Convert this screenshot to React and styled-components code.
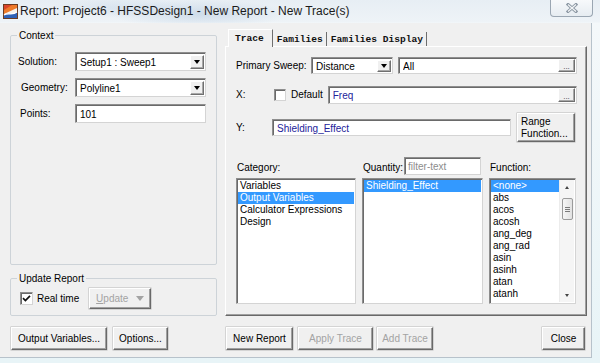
import React from 'react';
import styled, { createGlobalStyle, css } from 'styled-components';

const UI = `"Liberation Sans", Arial, sans-serif`;

const Global = createGlobalStyle`
  html, body { margin: 0; padding: 0; overflow: hidden; background: #eef5f8; }
  #root { width: 600px; height: 363px; }
  *, *::before, *::after { box-sizing: border-box; }
`;

const Window = styled.div`
  width: 600px;
  height: 363px;
  display: flex;
  flex-direction: column;
  overflow: hidden;
  font-family: ${UI};
  font-size: 10px;
  color: #000;
  background:
    radial-gradient(ellipse 90px 14px at 200px 14px, rgba(170, 195, 220, 0.45), transparent),
    radial-gradient(ellipse 70px 10px at 120px 8px, rgba(190, 210, 230, 0.4), transparent),
    linear-gradient(180deg, #e7eef4 0px, #eef3f7 22px, #f4f8fa 23px, #e8f4f7 100%);
`;

const TitleBar = styled.div`
  height: 23px;
  flex: none;
  display: flex;
  align-items: center;
  padding-left: 3px;
`;

const AppIcon = styled.svg`
  flex: none;
  display: block;
`;

const TitleText = styled.div`
  flex: 1;
  margin-left: 2px;
  font-size: 12px;
  line-height: 15px;
  color: #1b1b1b;
  white-space: nowrap;
`;

const CloseBtn = styled.div`
  align-self: flex-start;
  width: 43px;
  height: 17px;
  margin-right: 7px;
  border: 1px solid #9aa6b2;
  border-top: none;
  border-radius: 0 0 4px 4px;
  background: linear-gradient(180deg, #f7f9fb, #e6ecf1);
  display: flex;
  align-items: center;
  justify-content: center;
`;

const Body = styled.div`
  height: 335px;
  flex: none;
  margin-right: 8px;
  display: flex;
  gap: 8px;
  padding: 6px 4px 7px 10px;
  background: #f0f0f0;
  border-right: 1px solid #b7c2cb;
  border-bottom: 1px solid #b7c2cb;
`;

const Column = styled.div`
  display: flex;
  flex-direction: column;
  min-width: 0;
  ${(p) => (p.$width ? `width: ${p.$width}px; flex: none;` : 'flex: 1;')}
`;

const GroupBox = styled.fieldset`
  margin: 0;
  padding: 0 0 0 ${(p) => p.$pl || 0}px;
  min-width: 0;
  border: 1px solid #cdd3d8;
  border-radius: 2px;
  ${(p) => (p.$grow ? 'flex: 1;' : `flex: none; height: ${p.$h}px;`)}
  ${(p) => p.$mt && `margin-top: ${p.$mt}px;`}
`;

const Legend = styled.legend`
  margin-left: 6px;
  padding: 0 2px;
  font-size: 10px;
  line-height: 13px;
`;

const FieldGrid = styled.div`
  display: grid;
  grid-template-columns: 56px 131px;
  grid-auto-rows: 19px;
  row-gap: 7px;
  align-items: center;
  padding: 10px 0 0 8px;
`;

const Label = styled.span`
  white-space: nowrap;
  font-size: 10px;
  ${(p) => p.$w && `width: ${p.$w}px; flex: none;`}
  ${(p) => p.$indent && `margin-left: ${p.$indent}px;`}
  ${(p) => p.$ml && `margin-left: ${p.$ml}px;`}
`;

const sunken = css`
  background: #fff;
  border: 1px solid;
  border-color: #8e8e8e #d4d4d4 #d4d4d4 #8e8e8e;
  box-shadow: inset 1px 1px #6a6a6a;
`;

const SelectBox = styled.div`
  ${sunken}
  height: ${(p) => p.$h || 19}px;
  ${(p) => (p.$w ? `width: ${p.$w}px; flex: none;` : 'flex: 1; min-width: 0;')}
  display: flex;
  align-items: stretch;
  padding: 2px 1px 1px 4px;
`;

const BoxText = styled.span`
  flex: 1;
  display: flex;
  align-items: center;
  white-space: nowrap;
  overflow: hidden;
  font-size: 10px;
  color: ${(p) => p.$color || '#000'};
`;

const DropBtn = styled.span`
  width: 14px;
  flex: none;
  background: #f0f0f0;
  border: 1px solid;
  border-color: #fff #6f6f6f #6f6f6f #fff;
  box-shadow: inset -1px -1px #a8a8a8;
  display: flex;
  align-items: center;
  justify-content: center;
  &::after {
    content: '';
    border-left: 3px solid transparent;
    border-right: 3px solid transparent;
    border-top: 4px solid #000;
  }
`;

const DotsBtn = styled.span`
  width: 17px;
  flex: none;
  margin: -1px 0 0 0;
  background: #f0f0f0;
  border: 1px solid;
  border-color: #fff #6f6f6f #6f6f6f #fff;
  box-shadow: inset -1px -1px #a8a8a8;
  display: flex;
  align-items: flex-end;
  justify-content: center;
  font-size: 8px;
  line-height: 9px;
  color: #333;
  letter-spacing: 0;
`;

const Button = styled.button`
  height: ${(p) => p.$h || 23}px;
  width: ${(p) => p.$w}px;
  flex: none;
  padding: 0;
  margin: 0;
  ${(p) => p.$ml && `margin-left: ${p.$ml}px;`}
  ${(p) => p.$mr && `margin-right: ${p.$mr}px;`}
  font-family: ${UI};
  font-size: 10px;
  line-height: 12px;
  color: ${(p) => (p.disabled ? '#a3a3a3' : '#000')};
  background: #f0f0f0;
  border: 1px solid;
  border-color: #fff #696969 #696969 #fff;
  box-shadow: inset -1px -1px #a0a0a0, 0 0 0 0.5px #b8b8b8;
  display: flex;
  align-items: center;
  justify-content: ${(p) => (p.$left ? 'flex-start' : 'center')};
  ${(p) => p.$left && 'padding-left: 3px; text-align: left;'}
`;

const ButtonRow = styled.div`
  height: 23px;
  flex: none;
  margin-top: 11px;
  display: flex;
  align-items: center;
`;

const Spacer = styled.div`
  flex: 1;
`;

const InlineRow = styled.div`
  display: flex;
  align-items: center;
  padding: 3px 0 0 9px;
`;

const Check = styled.span`
  width: ${(p) => p.$size || 13}px;
  height: ${(p) => p.$size || 13}px;
  flex: none;
  ${sunken}
  display: flex;
  align-items: center;
  justify-content: center;
`;

const UpdateArrow = styled.span`
  margin-left: 8px;
  border-left: 4px solid transparent;
  border-right: 4px solid transparent;
  border-top: 5px solid #a3a3a3;
`;

const TabStrip = styled.div`
  height: 17px;
  flex: none;
  display: flex;
  align-items: flex-end;
  padding-left: 3px;
  position: relative;
  z-index: 1;
`;

const Tab = styled.div`
  font-family: "Liberation Mono", "DejaVu Sans Mono", monospace;
  font-weight: bold;
  font-size: 9.6px;
  color: #111;
  white-space: nowrap;
  background: #f0f0f0;
  display: flex;
  align-items: center;
  border-right: 1px solid #6e6e6e;
  ${(p) =>
    p.$active
      ? css`
          height: 18px;
          margin-bottom: -1px;
          padding: 0 8px 0 6px;
          border-left: 1px solid #fff;
          border-top: 1px solid #fff;
        `
      : css`
          height: 14px;
          padding: 0 3px 0 4px;
        `}
`;

const Panel = styled.div`
  flex: 1;
  min-height: 0;
  display: flex;
  flex-direction: column;
  padding: 10px 9px 11px 10px;
  border: 1px solid;
  border-color: #fff #696969 #696969 #fff;
  box-shadow: inset -1px -1px #a0a0a0;
`;

const FormRow = styled.div`
  display: flex;
  align-items: center;
  height: ${(p) => p.$h}px;
  flex: none;
  ${(p) => p.$mt && `margin-top: ${p.$mt}px;`}
`;

const ListGrid = styled.div`
  display: grid;
  grid-template-columns: 120px 121px 87px;
  column-gap: 6px;
  ${(p) => (p.$grow ? 'flex: 1; min-height: 0;' : `height: ${p.$h}px; flex: none;`)}
  ${(p) => p.$mt && `margin-top: ${p.$mt}px;`}
`;

const HeaderCell = styled.div`
  display: flex;
  align-items: center;
  padding-left: 1px;
  padding-top: 3px;
`;

const FilterBox = styled.div`
  ${sunken}
  width: 77px;
  height: 18px;
  margin-left: 1px;
  margin-top: -3px;
  padding: 1px 0 0 3px;
  display: flex;
  align-items: center;
  color: #8c8c8c;
  font-size: 10px;
`;

const ListBox = styled.div`
  ${sunken}
  display: flex;
  padding: 1px;
  overflow: hidden;
  min-height: 0;
`;

const ListItems = styled.div`
  flex: 1;
  min-width: 0;
  display: flex;
  flex-direction: column;
`;

const ListItem = styled.div`
  height: 12px;
  line-height: 12px;
  padding-left: 2px;
  white-space: nowrap;
  font-size: 10px;
  flex: none;
  ${(p) =>
    p.$selected &&
    css`
      background: #3399ff;
      color: #fff;
    `}
`;

const ScrollBar = styled.div`
  width: 15px;
  flex: none;
  background: #f5f5f5;
  border-left: 1px solid #ececec;
  display: flex;
  flex-direction: column;
  align-items: center;
`;

const ScrollArrow = styled.div`
  height: 14px;
  width: 100%;
  flex: none;
  display: flex;
  align-items: center;
  justify-content: center;
  ${(p) => p.$down && 'margin-top: auto;'}
  &::after {
    content: '';
    border-left: 2.5px solid transparent;
    border-right: 2.5px solid transparent;
    ${(p) => (p.$down ? 'border-top: 3px solid #444;' : 'border-bottom: 3px solid #444;')}
  }
`;

const ScrollThumb = styled.div`
  width: 11px;
  height: 22px;
  margin-top: 4px;
  border: 1px solid #9b9b9b;
  border-radius: 2px;
  background: linear-gradient(90deg, #f6f6f6, #e2e2e2);
  display: flex;
  align-items: center;
  justify-content: center;
`;

const categories = ['Variables', 'Output Variables', 'Calculator Expressions', 'Design'];
const functions = ['<none>', 'abs', 'acos', 'acosh', 'ang_deg', 'ang_rad', 'asin', 'asinh', 'atan', 'atanh'];

const CheckMark = () => (
  <svg width="9" height="9" viewBox="0 0 9 9">
    <path d="M1 4.2 L3.4 6.6 L8 1.8" fill="none" stroke="#111" strokeWidth="1.7" />
  </svg>
);

const Select = ({ w, h, children }) => (
  <SelectBox $w={w} $h={h}>
    <BoxText>{children}</BoxText>
    <DropBtn />
  </SelectBox>
);

export default function App() {
  return (
    <>
      <Global />
      <Window>
        <TitleBar>
          <AppIcon width="15" height="15" viewBox="0 0 15 15">
            <rect x="0.5" y="0.5" width="14" height="14" fill="#f7f3ee" stroke="#6b3b22" />
            <path d="M1 1 H14 V4 L1 10 Z" fill="#ee7a2a" />
            <path d="M1 1 H9 L1 6 Z" fill="#d9452a" />
            <path d="M1 14 V11 C5 8 9 12 14 8 V14 Z" fill="#2f62b8" />
            <path d="M1 11 C5 8 9 12 14 8" fill="none" stroke="#ffffff" strokeWidth="1.2" />
          </AppIcon>
          <TitleText>Report: Project6 - HFSSDesign1 - New Report - New Trace(s)</TitleText>
          <CloseBtn>
            <svg width="12" height="10" viewBox="0 0 12 10">
              <path d="M2 1.5 L10 8.5 M10 1.5 L2 8.5" stroke="#8a96a2" strokeWidth="3" strokeLinecap="square" />
              <path d="M2 1.5 L10 8.5 M10 1.5 L2 8.5" stroke="#f4f6f8" strokeWidth="1.2" />
            </svg>
          </CloseBtn>
        </TitleBar>

        <Body>
          <Column $width={207}>
            <GroupBox $grow>
              <Legend>Context</Legend>
              <FieldGrid>
                <Label $indent={-1}>Solution:</Label>
                <Select>Setup1 : Sweep1</Select>
                <Label $indent={2}>Geometry:</Label>
                <Select>Polyline1</Select>
                <Label $indent={1}>Points:</Label>
                <SelectBox>
                  <BoxText>101</BoxText>
                </SelectBox>
              </FieldGrid>
            </GroupBox>

            <GroupBox $h={44} $mt={7}>
              <Legend>Update Report</Legend>
              <InlineRow>
                <Check>
                  <CheckMark />
                </Check>
                <Label $ml={4}>Real time</Label>
                <Button $w={62} $h={21} $ml={10} disabled>
                  <u>U</u>pdate
                  <UpdateArrow />
                </Button>
              </InlineRow>
            </GroupBox>

            <ButtonRow>
              <Button $w={96} $ml={1}>Output Variables...</Button>
              <Button $w={55} $ml={6}>Options...</Button>
            </ButtonRow>
          </Column>

          <Column>
            <TabStrip>
              <Tab $active>Trace</Tab>
              <Tab>Families</Tab>
              <Tab>Families Display</Tab>
            </TabStrip>
            <Panel>
              <FormRow $h={17}>
                <Label $w={75}>Primary Sweep:</Label>
                <Select w={82} h={17}>Distance</Select>
                <SelectBox $h={17} style={{ marginLeft: 5 }}>
                  <BoxText>All</BoxText>
                  <DotsBtn>...</DotsBtn>
                </SelectBox>
              </FormRow>

              <FormRow $h={17} $mt={12}>
                <Label $w={38}>X:</Label>
                <Check $size={12} />
                <Label $ml={5}>Default</Label>
                <SelectBox $h={18} style={{ marginLeft: 5 }}>
                  <BoxText $color="#23239a">Freq</BoxText>
                  <DotsBtn>...</DotsBtn>
                </SelectBox>
              </FormRow>

              <FormRow $h={29} $mt={10}>
                <Label $w={36}>Y:</Label>
                <SelectBox $w={239} $h={17}>
                  <BoxText $color="#23239a">Shielding_Effect</BoxText>
                </SelectBox>
                <Spacer />
                <Button $w={58} $h={29} $mr={2} $left>
                  Range
                  <br />
                  Function...
                </Button>
              </FormRow>

              <ListGrid $h={18} $mt={15}>
                <HeaderCell>Category:</HeaderCell>
                <HeaderCell>
                  Quantity:
                  <FilterBox>filter-text</FilterBox>
                </HeaderCell>
                <HeaderCell>Function:</HeaderCell>
              </ListGrid>

              <ListGrid $grow $mt={3}>
                <ListBox>
                  <ListItems>
                    {categories.map((c) => (
                      <ListItem key={c} $selected={c === 'Output Variables'}>
                        {c}
                      </ListItem>
                    ))}
                  </ListItems>
                </ListBox>
                <ListBox>
                  <ListItems>
                    <ListItem $selected>Shielding_Effect</ListItem>
                  </ListItems>
                </ListBox>
                <ListBox>
                  <ListItems>
                    {functions.map((f) => (
                      <ListItem key={f} $selected={f === '<none>'}>
                        {f}
                      </ListItem>
                    ))}
                  </ListItems>
                  <ScrollBar>
                    <ScrollArrow />
                    <ScrollThumb>
                      <svg width="5" height="5" viewBox="0 0 5 5">
                        <path d="M0 0.5 H5 M0 2.5 H5 M0 4.5 H5" stroke="#7a7a7a" strokeWidth="1" />
                      </svg>
                    </ScrollThumb>
                    <ScrollArrow $down />
                  </ScrollBar>
                </ListBox>
              </ListGrid>
            </Panel>

            <ButtonRow>
              <Button $w={67} $ml={1}>New Report</Button>
              <Button $w={75} $ml={5} disabled>Apply Trace</Button>
              <Button $w={56} $ml={4} disabled>Add Trace</Button>
              <Spacer />
              <Button $w={43} $mr={2}>Close</Button>
            </ButtonRow>
          </Column>
        </Body>
      </Window>
    </>
  );
}
